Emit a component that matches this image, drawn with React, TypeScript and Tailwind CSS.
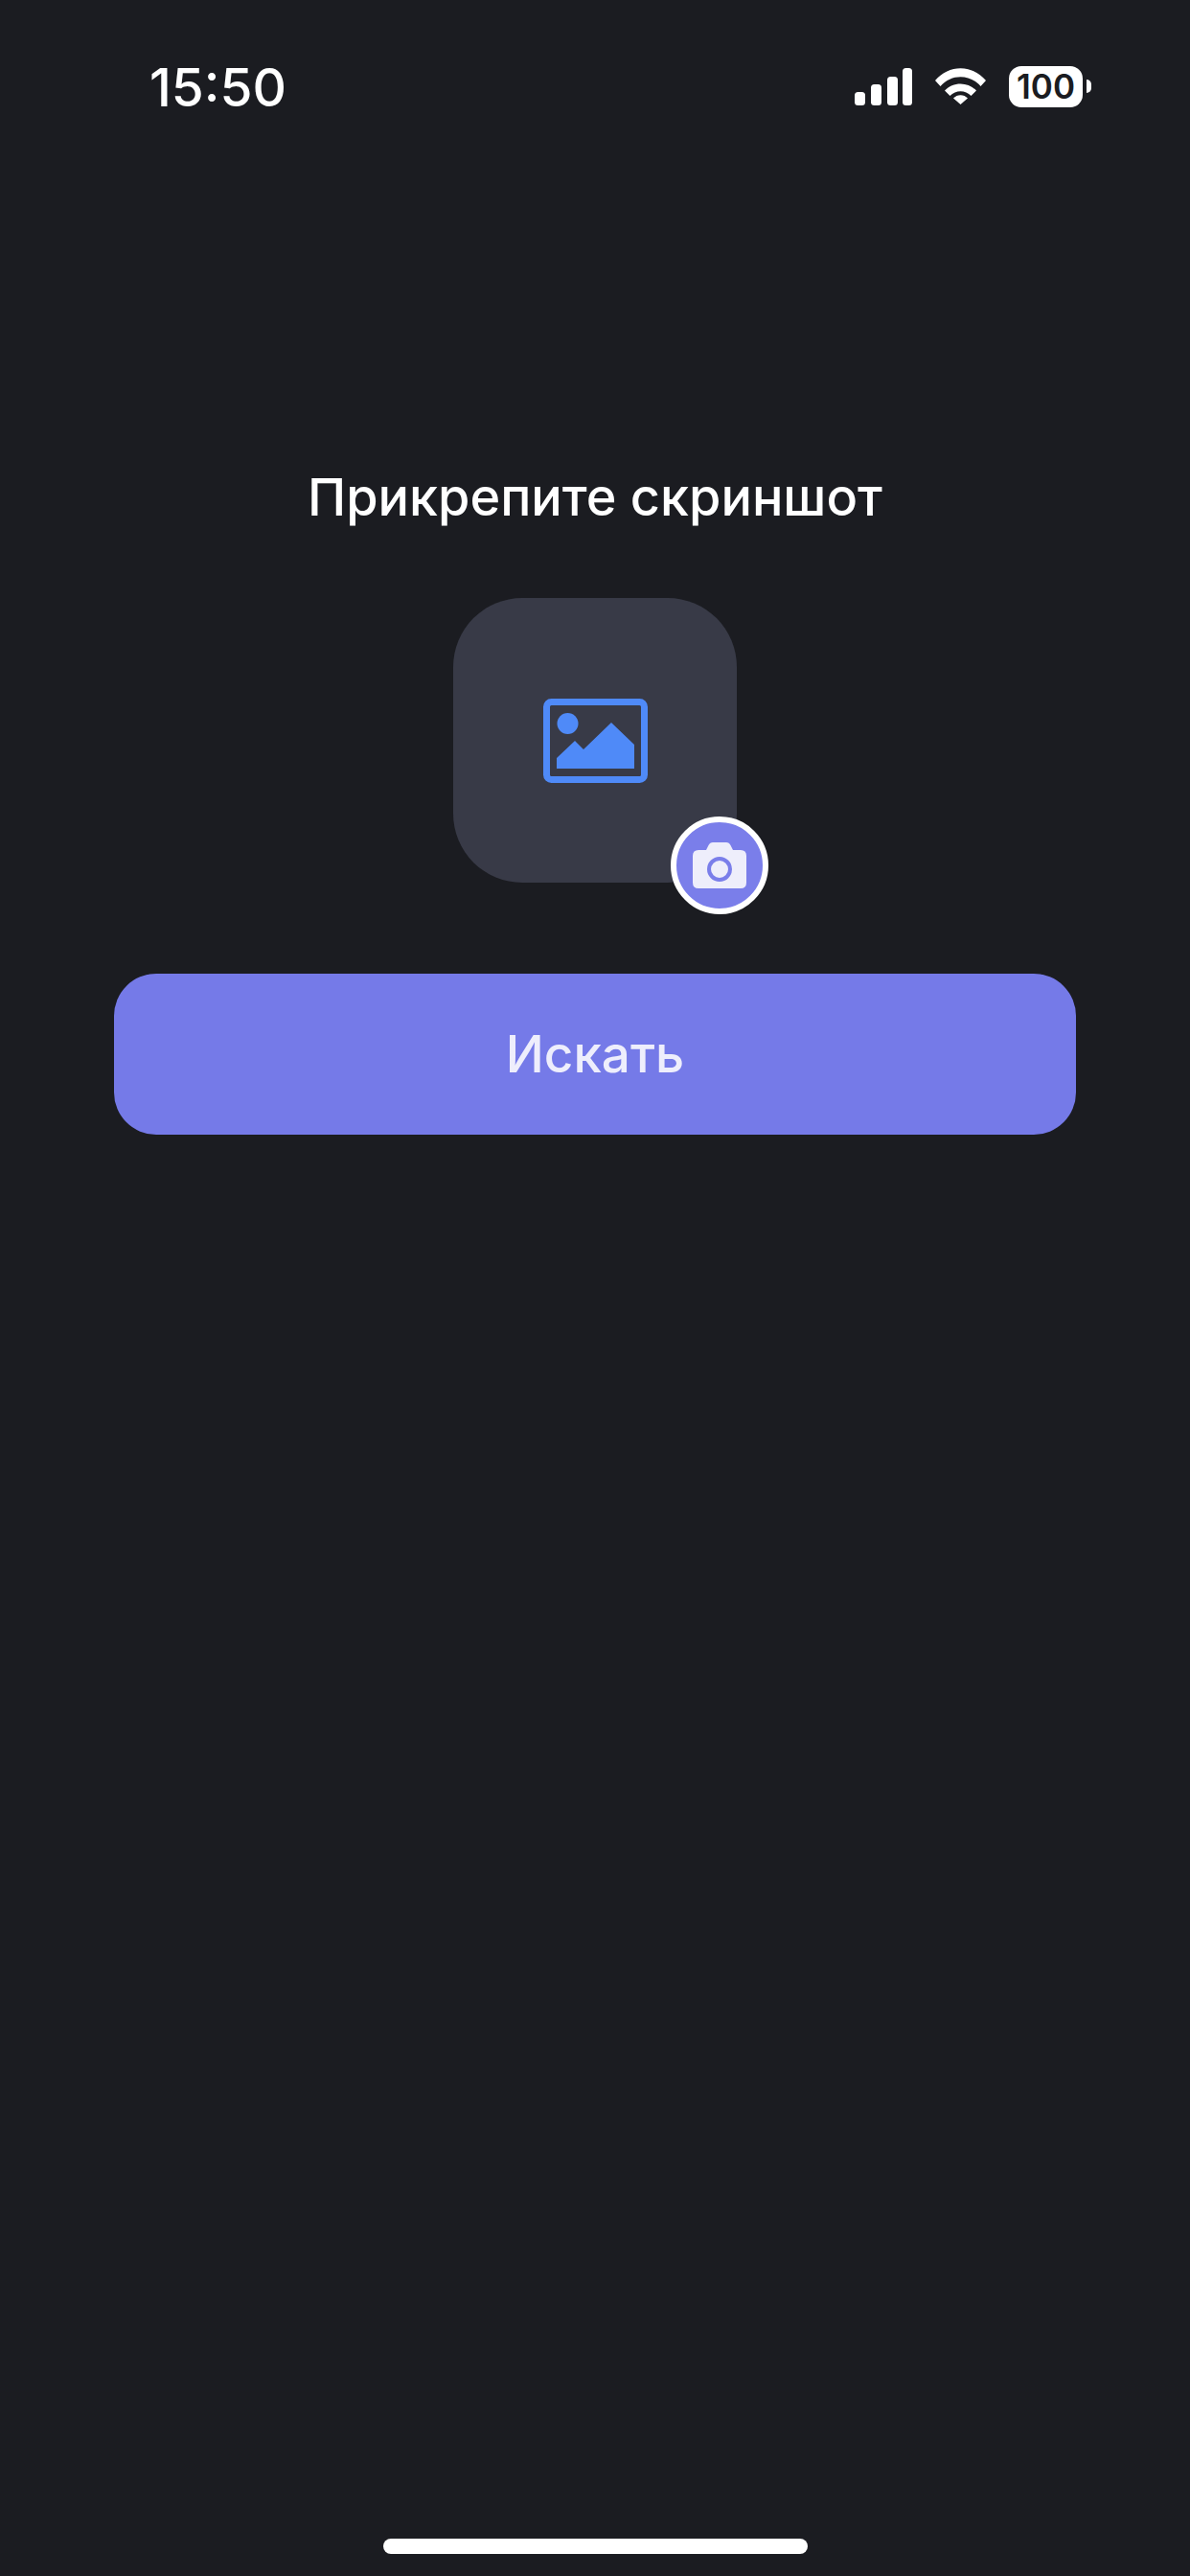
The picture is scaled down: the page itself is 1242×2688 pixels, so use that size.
const StatusIcons = () => (
  <div className="flex items-center">
    <svg width="60" height="39" viewBox="0 0 60 39" fill="white" className="block">
      <rect x="0" y="25" width="11" height="14" rx="3.5" />
      <rect x="17" y="17" width="11" height="22" rx="3.5" />
      <rect x="34" y="9" width="11" height="30" rx="3.5" />
      <rect x="50" y="0" width="10" height="39" rx="3.5" />
    </svg>
    <svg width="53" height="38" viewBox="0 0 53 38" fill="white" className="ml-[24px] block">
      <path d="M0 13 C14.500 -4 38.500 -4 53 13 L47.500 19 C36 6 17 6 5.500 19 Z" />
      <path d="M10 23.500 C18.500 14 34.500 14 43 23.500 L37.500 29 C31.500 22.500 21.500 22.500 15.500 29 Z" />
      <path d="M19 31.500 C23 27 30 27 34 31.500 L26.500 38 Z" />
    </svg>
    <div className="ml-[24px] flex h-[43px] w-[77px] items-center justify-center rounded-[13px] bg-white text-[35px] leading-none font-semibold text-[#1b1c21]">
      100
    </div>
    <div className="ml-[4px] h-[14px] w-[5px] rounded-r-full bg-white" />
  </div>
);

const ImageIcon = () => (
  <svg width="109" height="88" viewBox="0 0 109 88" fill="#4f8af8" className="block">
    <rect x="3.500" y="3.500" width="102" height="81" rx="5" fill="none" stroke="#4f8af8" strokeWidth="7" />
    <circle cx="25.500" cy="26" r="11" />
    <path d="M14 62 L33 44 L42 53 L71 25 L95 48 L95 73 L14 73 Z" />
  </svg>
);

const CameraIcon = () => (
  <svg width="56" height="48" viewBox="0 0 56 48" className="block">
    <path
      fill="#eeeefb"
      d="M6 8 H14 L16.500 3 Q18 0 21 0 H35 Q38 0 39.500 3 L42 8 H50 Q56 8 56 14 V42 Q56 48 50 48 H6 Q0 48 0 42 V14 Q0 8 6 8 Z"
    />
    <circle cx="28" cy="28" r="11" fill="none" stroke="#7a7eea" strokeWidth="4" />
  </svg>
);

export default function App() {
  return (
    <div className="flex h-[2688px] w-[1242px] flex-col bg-[#1b1c21] font-['Inter',sans-serif]">
      <div className="flex items-center justify-between pt-[66px] pr-[103px] pl-[156px]">
        <span className="translate-y-[1px] text-[55px] leading-[48px] font-[550] text-white">15:50</span>
        <StatusIcons />
      </div>

      <h1 className="mt-[374px] text-center text-[54px] leading-[62px] font-[550] text-white">
        Прикрепите скриншот
      </h1>

      <div className="relative mx-auto mt-[74px] flex h-[297px] w-[296px] items-center justify-center rounded-[72px] bg-[#383a47]">
        <ImageIcon />
        <div className="absolute top-[228px] left-[227px] flex h-[102px] w-[102px] items-center justify-center rounded-full border-[6px] border-white bg-[#7a7eea]">
          <CameraIcon />
        </div>
      </div>

      <button className="mx-auto mt-[95px] flex h-[168px] w-[1004px] items-center justify-center rounded-[44px] bg-[#757ae8] pt-[2px] text-[53px] font-[550] text-[#eeeefc]">
        Искать
      </button>

      <div className="mx-auto mt-auto mb-[23px] h-[16px] w-[443px] rounded-full bg-white" />
    </div>
  );
}
